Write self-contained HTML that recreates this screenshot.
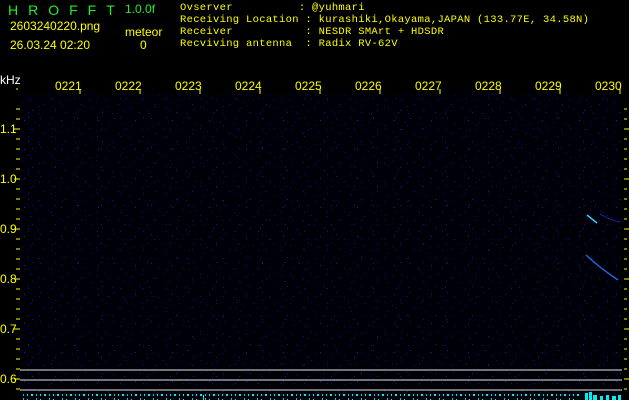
<!DOCTYPE html>
<html><head><style>
body{margin:0;width:629px;height:400px;background:#000;overflow:hidden;position:relative;font-family:"Liberation Sans Narrow","Liberation Sans",sans-serif;}
.t{position:absolute;color:#ff0;white-space:pre;line-height:1;}
.m{font-family:"Liberation Mono",monospace;font-size:10.5px;color:#ff0;letter-spacing:0.3px}
</style></head><body>
<svg width="629" height="400" style="position:absolute;left:0;top:0">
<defs>
<pattern id="n" width="37" height="29" patternUnits="userSpaceOnUse">
<rect width="37" height="29" fill="#000008"/>
<rect x="3" y="2" width="1" height="1" fill="#1a1a9a"/>
<rect x="11" y="7" width="1" height="1" fill="#0d0d70"/>
<rect x="24" y="4" width="1" height="1" fill="#2020b0"/>
<rect x="31" y="13" width="1" height="1" fill="#10108a"/>
<rect x="7" y="17" width="1" height="1" fill="#1818a0"/>
<rect x="18" y="21" width="1" height="1" fill="#0c0c6a"/>
<rect x="28" y="25" width="1" height="1" fill="#1c1ca8"/>
<rect x="15" y="12" width="1" height="1" fill="#101080"/>
<rect x="35" y="6" width="1" height="1" fill="#0a0a60"/>
<rect x="1" y="26" width="1" height="1" fill="#14148c"/>
<rect x="22" y="15" width="1" height="1" fill="#0a0a66"/>
</pattern>
<pattern id="n2" width="23" height="19" patternUnits="userSpaceOnUse">
<rect x="5" y="3" width="1" height="1" fill="#121290"/>
<rect x="16" y="11" width="1" height="1" fill="#0e0e78"/>
<rect x="9" y="15" width="1" height="1" fill="#1515a0"/>
</pattern>
<pattern id="b" width="13" height="6" patternUnits="userSpaceOnUse">
<rect x="1" y="3" width="1" height="3" fill="#0ee"/>
<rect x="5" y="4" width="2" height="2" fill="#0ee"/>
<rect x="10" y="2" width="1" height="4" fill="#0cc"/>
</pattern>
</defs>
<rect x="20" y="94" width="602" height="306" fill="url(#n)"/>
<rect x="20" y="94" width="602" height="306" fill="url(#n2)"/>
<g stroke="#999" stroke-width="1.5">
<line x1="20" y1="370" x2="622" y2="370"/><line x1="20" y1="380" x2="622" y2="380"/><line x1="20" y1="390" x2="622" y2="390"/>
</g>
<g stroke="#3cf" stroke-width="1.5" fill="none">
<path d="M587 215 L597 223"/>
<path d="M586 255 Q600 268 618 280" stroke="#26d" />
<path d="M600 214 Q610 220 620 222" stroke="#22b" stroke-width="1"/>
</g>
<rect x="22" y="394" width="560" height="6" fill="url(#b)"/>
<g fill="#0ee">
<rect x="585" y="393" width="3" height="7"/><rect x="589" y="392" width="3" height="8"/><rect x="593" y="395" width="4" height="5"/>
<rect x="600" y="396" width="3" height="4"/><rect x="606" y="395" width="3" height="5"/><rect x="612" y="396" width="4" height="4"/><rect x="618" y="395" width="3" height="5"/>
<rect x="203" y="395" width="1" height="5"/>
</g>
<g stroke="#ff0" stroke-width="1">
<path d="M16 109H20M16 119H20M14 129H20M16 139H20M16 149H20M16 159H20M16 169H20M14 179H20M16 189H20M16 199H20M16 209H20M16 219H20M14 229H20M16 239H20M16 249H20M16 259H20M16 269H20M14 279H20M16 289H20M16 299H20M16 309H20M16 319H20M14 329H20M16 339H20M16 349H20M16 359H20M16 369H20M14 379H20M16 389H20"/>
<path d="M624 109H627M624 119H627M624 129H629M624 139H627M624 149H627M624 159H627M624 169H627M624 179H629M624 189H627M624 199H627M624 209H627M624 219H627M624 229H629M624 239H627M624 249H627M624 259H627M624 269H627M624 279H629M624 289H627M624 299H627M624 309H627M624 319H627M624 329H629M624 339H627M624 349H627M624 359H627M624 369H627M624 379H629M624 389H627"/>
<path d="M16 89H18M80 89V94M140 89V94M200 89V94M260 89V94M320 89V94M380 89V94M440 89V94M500 89V94M560 89V94M620 89V94"/>
</g>
</svg>
<div class="t" style="left:8px;top:3px;color:#2e2;font-size:14px;letter-spacing:10px">HROFFT</div>
<div class="t" style="left:125px;top:3px;color:#2e2;font-size:12px">1.0.0f</div>
<div class="t" style="left:10px;top:20px;font-size:12px">2603240220.png</div>
<div class="t" style="left:125px;top:26px;font-size:12px">meteor</div>
<div class="t" style="left:10px;top:39px;font-size:12px">26.03.24 02:20</div>
<div class="t" style="left:140px;top:39px;font-size:12px">0</div>
<div class="t m" style="left:180px;top:3px">Ovserver          : @yuhmari</div>
<div class="t m" style="left:180px;top:15px">Receiving Location : kurashiki,Okayama,JAPAN (133.77E, 34.58N)</div>
<div class="t m" style="left:180px;top:27px">Receiver           : NESDR SMArt + HDSDR</div>
<div class="t m" style="left:180px;top:39px">Recviving antenna  : Radix RV-62V</div>
<div class="t" style="left:0px;top:74px;font-size:12px;color:#fff">kHz</div>
<div class="t" style="left:0;top:123px;font-size:12px">1.1</div>
<div class="t" style="left:0;top:173px;font-size:12px">1.0</div>
<div class="t" style="left:0;top:223px;font-size:12px">0.9</div>
<div class="t" style="left:0;top:273px;font-size:12px">0.8</div>
<div class="t" style="left:0;top:323px;font-size:12px">0.7</div>
<div class="t" style="left:0;top:373px;font-size:12px">0.6</div>
<div class="t" style="left:55px;top:80px;font-size:12px">0221</div>
<div class="t" style="left:115px;top:80px;font-size:12px">0222</div>
<div class="t" style="left:175px;top:80px;font-size:12px">0223</div>
<div class="t" style="left:235px;top:80px;font-size:12px">0224</div>
<div class="t" style="left:295px;top:80px;font-size:12px">0225</div>
<div class="t" style="left:355px;top:80px;font-size:12px">0226</div>
<div class="t" style="left:415px;top:80px;font-size:12px">0227</div>
<div class="t" style="left:475px;top:80px;font-size:12px">0228</div>
<div class="t" style="left:535px;top:80px;font-size:12px">0229</div>
<div class="t" style="left:595px;top:80px;font-size:12px">0230</div>
</body></html>
